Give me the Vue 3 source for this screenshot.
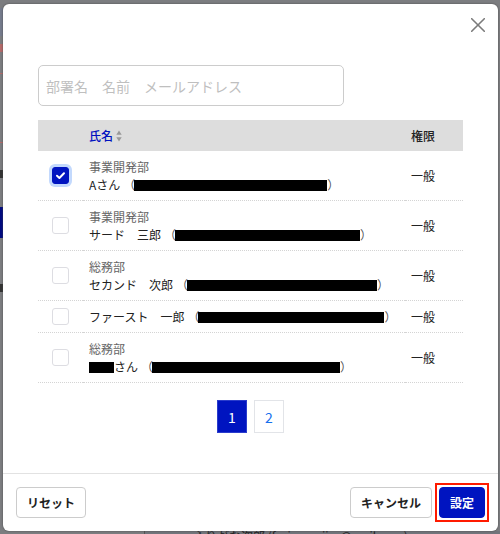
<script setup>
import { ref } from 'vue'

const keyword = ref('')
const page = ref(1)
const members = ref([
  { id: 1, dept: '事業開発部', name: 'Aさん', mail: 193, role: '一般', checked: true },
  { id: 2, dept: '事業開発部', name: 'サード　三郎', mail: 185, role: '一般', checked: false },
  { id: 3, dept: '総務部', name: 'セカンド　次郎', mail: 190, role: '一般', checked: false },
  { id: 4, dept: '', name: 'ファースト　一郎', mail: 186, role: '一般', checked: false },
  { id: 5, dept: '総務部', name: 'さん', masked: 25, mail: 188, role: '一般', checked: false }
])

function reset() {
  keyword.value = ''
  members.value.forEach((m) => { m.checked = false })
}
</script>

<template>
  <div class="screen">
    <div class="behind" aria-hidden="true">
      <i class="pale"></i>
      <i class="red r1"></i>
      <i class="red r2"></i>
      <i class="red r3"></i>
      <i class="navy"></i>
      <i class="ink k1"></i>
      <i class="ink k2"></i>
      <i class="base"></i>
      <span class="under">ふりがな次郎 (furigana.jiro@mail.com)</span>
    </div>

    <section class="modal" role="dialog" aria-modal="true" aria-label="メンバー">
      <header class="top">
        <button type="button" class="close" aria-label="閉じる">
          <svg viewBox="0 0 14 14" width="14" height="14">
            <path d="M0.7 0.7 L13.3 13.3 M13.3 0.7 L0.7 13.3" fill="none" stroke="#7b7b7b" stroke-width="1.6" stroke-linecap="round" />
          </svg>
        </button>
      </header>

      <div class="body">
        <input v-model="keyword" class="search" type="text" aria-label="検索" placeholder="部署名　名前　メールアドレス" />

        <table class="list">
          <colgroup>
            <col class="c-check" />
            <col />
            <col class="c-role" />
          </colgroup>
          <thead>
            <tr>
              <th></th>
              <th>
                <button type="button" class="sort">
                  氏名
                  <svg viewBox="0 0 6 12" width="6" height="12">
                    <path d="M3 0.5 L5.7 4.8 H0.3 Z M3 11.5 L5.7 7.2 H0.3 Z" fill="#999" />
                  </svg>
                </button>
              </th>
              <th>権限</th>
            </tr>
          </thead>
          <tbody>
            <tr v-for="m in members" :key="m.id">
              <td class="pick">
                <label class="check">
                  <input v-model="m.checked" type="checkbox" :aria-label="m.name" />
                  <svg v-if="m.checked" viewBox="0 0 17 17" width="17" height="17">
                    <path d="M5 8.8 L7.4 11 L12 6.3" fill="none" stroke="#fff" stroke-width="2" stroke-linecap="round" stroke-linejoin="round" />
                  </svg>
                </label>
              </td>
              <td>
                <div v-if="m.dept" class="dept">{{ m.dept }}</div>
                <div class="name">
                  <span v-if="m.masked" class="mask" :style="{ width: m.masked + 'px' }"></span>
                  <span>{{ m.name }}</span>
                  <span class="paren open">（</span>
                  <span class="mask mail" :style="{ width: m.mail + 'px' }"></span>
                  <span class="paren">）</span>
                </div>
              </td>
              <td>{{ m.role }}</td>
            </tr>
          </tbody>
        </table>

        <nav class="pager" aria-label="ページ">
          <button v-for="n in 2" :key="n" type="button" :class="{ current: n === page }" @click="page = n">{{ n }}</button>
        </nav>
      </div>

      <footer class="foot">
        <button type="button" class="btn" @click="reset">リセット</button>
        <div class="actions">
          <button type="button" class="btn">キャンセル</button>
          <div class="marked">
            <button type="button" class="btn primary">設定</button>
          </div>
        </div>
      </footer>
    </section>
  </div>
</template>

<style>
body {
  background: #808080;
}
</style>

<style scoped>
.screen {
  position: relative;
  min-height: 100vh;
  box-sizing: border-box;
  padding: 4px 2px 3px 3px;
  overflow: hidden;
  background: #7c7d80;
  color: #222;
  font: 12px/18px "Noto Sans CJK JP", "Noto Sans", sans-serif;
}
.behind i,
.under {
  position: absolute;
}
.behind i {
  left: 0;
  width: 3px;
}
.behind .pale { top: 8px; height: 28px; background: #757b8c; }
.behind .red { height: 1px; background: #b56a6a; }
.behind .r1 { top: 44px; height: 8px; }
.behind .r2 { top: 73px; }
.behind .r3 { top: 142px; }
.behind .navy { top: 207px; height: 31px; background: #000a80; }
.behind .ink { background: #333; }
.behind .k1 { top: 170px; height: 8px; }
.behind .k2 { top: 284px; height: 8px; }
.behind .base { left: 144px; right: 0; bottom: 0; width: auto; height: 3px; background: #72757c; border-left: 1px solid #555; }
.under {
  left: 193px;
  bottom: -11px;
  color: #222;
  font-size: 12px;
  white-space: nowrap;
}
.modal {
  position: relative;
  display: flex;
  flex-direction: column;
  min-height: calc(100vh - 7px);
  border-radius: 6px;
  background: #fff;
  box-shadow: 0 0 2px #444;
}
.top {
  display: flex;
  justify-content: flex-end;
  padding: 10px 9px 0;
}
button {
  font: inherit;
  cursor: pointer;
}
.close {
  display: flex;
  padding: 4px;
  border: 0;
  background: none;
}
.body {
  flex: 1;
  padding: 29px 35px 40px;
}
.search {
  display: block;
  width: 72%;
  height: 41px;
  box-sizing: border-box;
  padding: 0 7px;
  border: 1px solid #ccc;
  border-radius: 5px;
  background: #fff;
  color: #222;
  font: inherit;
  font-size: 14px;
}
.search::placeholder {
  color: #bfbfbf;
  opacity: 1;
}
.list {
  width: 100%;
  margin-top: 14px;
  border-collapse: separate;
  border-spacing: 0;
  table-layout: fixed;
}
.c-check { width: 45px; }
.c-role { width: 58px; }
th {
  height: 31px;
  padding: 0 6px;
  background: #ddd;
  font-weight: 500;
  text-align: left;
}
.sort {
  display: flex;
  align-items: center;
  gap: 3px;
  padding: 0;
  border: 0;
  background: none;
  color: #0011c0;
}
td {
  padding: 7px 6px 6px;
  border-bottom: 1px dotted #d4d4d4;
  white-space: nowrap;
}
.pick {
  padding: 0 0 0 14px;
}
.check {
  position: relative;
  display: block;
  width: 17px;
  height: 17px;
}
.check input {
  display: block;
  width: 17px;
  height: 17px;
  margin: 0;
  appearance: none;
  border: 1px solid #dddde2;
  border-radius: 3px;
  background: #fff;
}
.check input:checked {
  border-color: #0014c0;
  background: #0014c0;
  box-shadow: 0 0 0 3px #c3d9fd;
}
.check svg {
  position: absolute;
  inset: 0;
  pointer-events: none;
}
.dept {
  color: #666;
}
.name {
  display: flex;
  align-items: center;
}
.mask {
  height: 11px;
  background: #000;
}
.paren {
  color: #555;
}
.open {
  margin-left: 3px;
}
.mail {
  margin-left: -1px;
}
.pager {
  display: flex;
  justify-content: center;
  gap: 7px;
  margin-top: 17px;
}
.pager button {
  width: 30px;
  height: 33px;
  padding: 0;
  border: 1px solid #e2e4e8;
  background: #fff;
  color: #1670ee;
  font-size: 14px;
}
.pager .current {
  border-color: #2a3ccc;
  background: #0014c0;
  color: #fff;
}
.foot {
  display: flex;
  justify-content: space-between;
  padding: 13px;
  border-top: 1px solid #e2e2e2;
}
.actions {
  display: flex;
  gap: 7px;
}
.btn {
  display: block;
  height: 31px;
  padding: 0 10px;
  border: 1px solid #ccc;
  border-radius: 4px;
  background: #fff;
  color: #222;
  font-weight: 700;
  line-height: 18px;
}
.primary {
  border-color: #0014c0;
  background: #0014c0;
  color: #fff;
}
.marked {
  outline: 2px solid #ff1a00;
  outline-offset: 2px;
}
</style>
